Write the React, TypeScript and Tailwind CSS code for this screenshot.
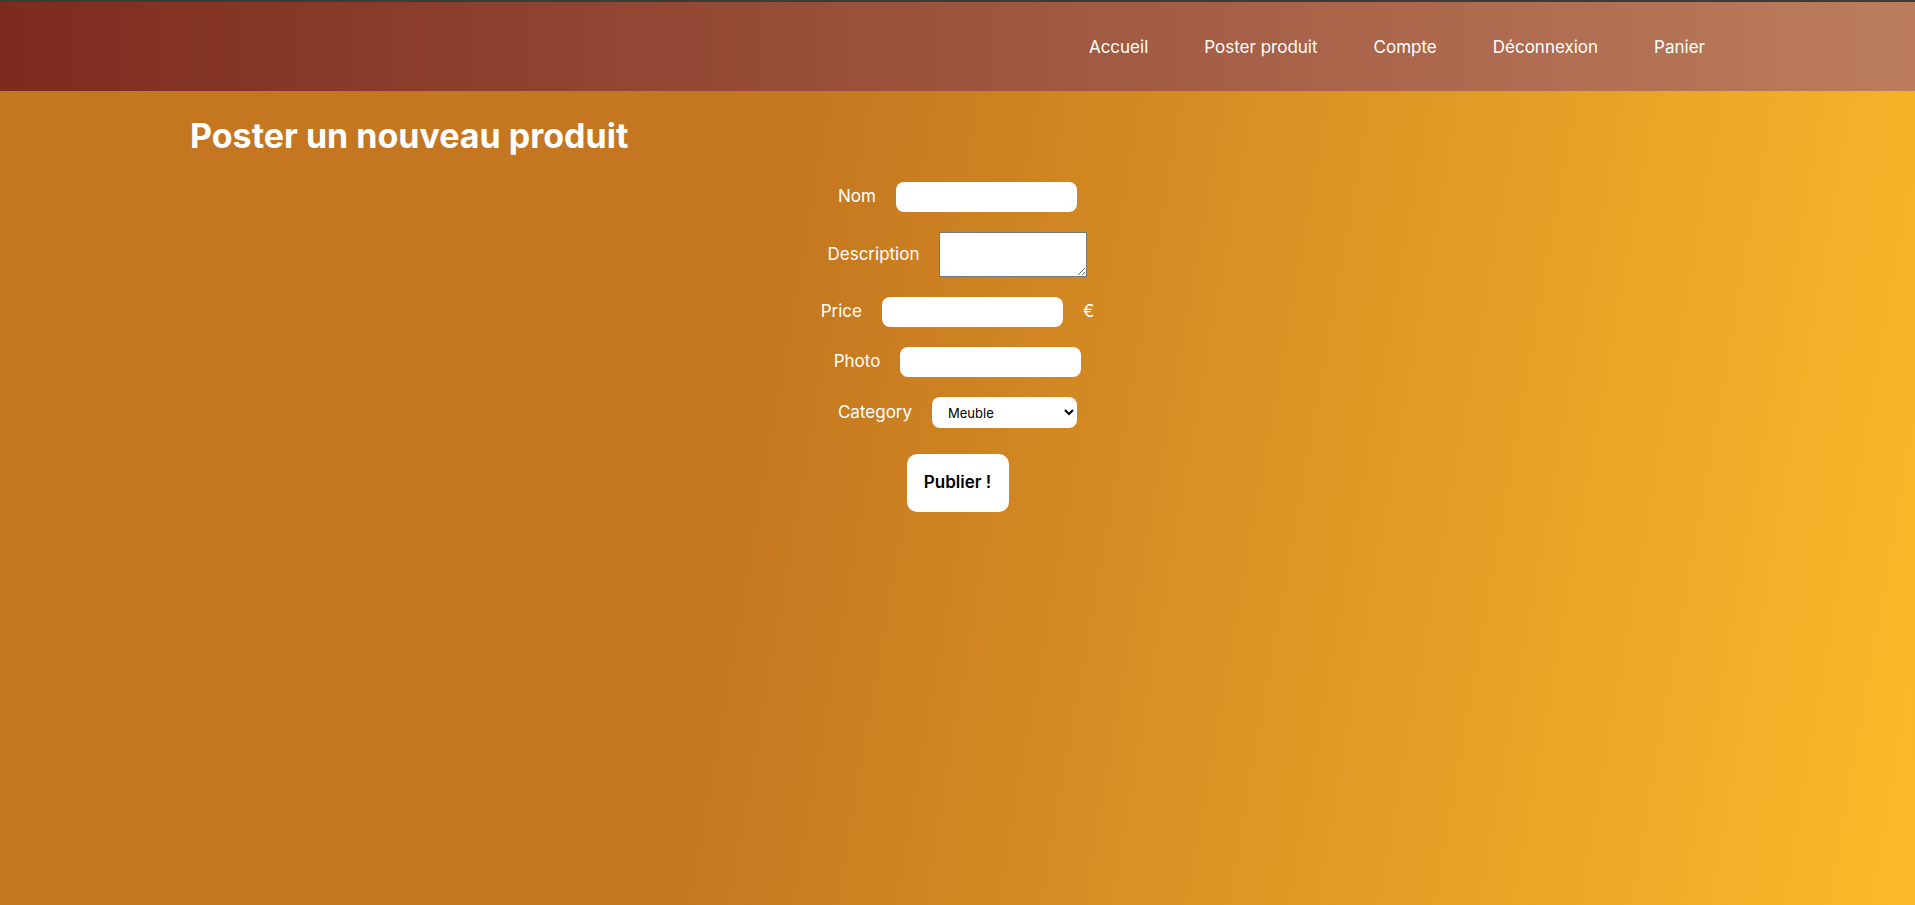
const navLinks = ["Accueil", "Poster produit", "Compte", "Déconnexion", "Panier"];

const font = { fontFamily: "Inter, 'Noto Sans', sans-serif" };

function Header() {
  return (
    <header className="h-[91px] shrink-0 border-t-2 border-[#3d3a38] bg-gradient-to-r from-[#7d2a1e] to-[#bc7d5e]">
      <nav className="flex h-full items-center justify-end gap-[56px] pr-[210px] pt-[2px]">
        {navLinks.map((link) => (
          <a key={link} href="#" className="text-[17px] text-white">
            {link}
          </a>
        ))}
      </nav>
    </header>
  );
}

function Row({ label, children }: { label: string; children: React.ReactNode }) {
  return (
    <div className="flex items-center justify-center gap-5">
      <label className="text-[17px] text-white">{label}</label>
      {children}
    </div>
  );
}

export default function App() {
  return (
    <div className="flex min-h-screen flex-col" style={font}>
      <Header />
      <main className="flex-1 bg-[linear-gradient(100deg,#c47720_39%,#fcba2a_100%)] pt-[21px]">
        <h1 className="ml-[190px] text-[34px] leading-[48px] font-bold text-white">
          Poster un nouveau produit
        </h1>

        <form className="mt-[22px] flex flex-col items-center gap-5">
          <Row label="Nom">
            <input type="text" className="h-[30px] w-[181px] rounded-lg bg-white px-2" />
          </Row>
          <Row label="Description">
            <textarea className="h-[45px] w-[148px] border border-[#767676] bg-white" />
          </Row>
          <Row label="Price">
            <input type="number" className="h-[30px] w-[181px] rounded-lg bg-white px-2" />
            <span className="text-[17px] text-white">€</span>
          </Row>
          <Row label="Photo">
            <input type="text" className="h-[30px] w-[181px] rounded-lg bg-white px-2" />
          </Row>
          <Row label="Category">
            <select
              defaultValue="Meuble"
              className="h-[31px] w-[145px] rounded-lg bg-white pl-3 pr-1 text-[13px] text-black"
            >
              <option>Meuble</option>
              <option>Vêtement</option>
              <option>Électronique</option>
            </select>
          </Row>
          <button
            type="button"
            className="mt-[6px] h-[58px] w-[102px] rounded-[10px] bg-white text-[17px] font-semibold text-black"
          >
            Publier !
          </button>
        </form>
      </main>
    </div>
  );
}
